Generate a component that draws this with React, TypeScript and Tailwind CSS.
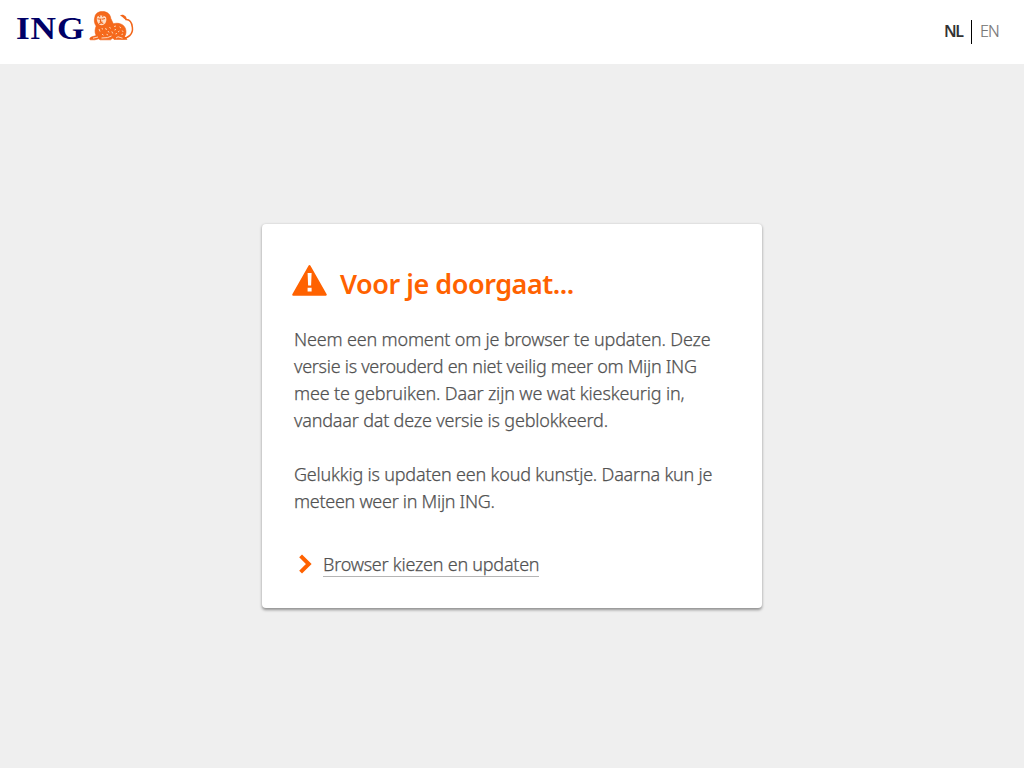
function Lion() {
  return (
    <svg className="h-[30px] w-[46px]" viewBox="0 0 46 30" fill="none">
      <path d="M32 27.5C39 28 44.3 23 43.4 16.5C42.8 11 40 8.2 36.3 8.6" stroke="#f2661a" strokeWidth="1.5" />
      <path d="M31 4.6C32.5 3 35 3.6 36.5 5.2C37.3 6.2 37.8 7.5 37.8 9C35.5 8.8 34.8 6.6 31 4.6Z" fill="#f2661a" />
      <path
        d="M6 5.5C6.5 2.4 10 .4 13.5 .6C18 .5 21.3 3.2 21.8 7.5L24.3 12.8C26.5 12 31 11.8 34.3 14.4C37.5 17.4 37.7 22.7 35.6 25.3L38 28.4H25L23.8 27L21.5 28.8H11L9.7 27.8L5.8 28.8H1.2C.3 28 1 26.3 3 25.8L7.2 24.5C5.3 21 6.1 18 7.2 15C4.8 12 5.2 8 6 5.5Z"
        fill="#f5691c"
        stroke="#ee5e12"
        strokeWidth=".6"
      />
      <path d="M8.2 5.8C10.2 4.2 15 4 17 6.2C17.9 8.5 17.2 12 14.9 13.6C12.8 14.8 10.5 14.2 9.1 12.3C7.6 10 7.5 7.5 8.2 5.8Z" fill="#ffdcc4" />
      <path d="M8.5 7.7L11.3 8.3M13 8.3L16 7.5M12 7.5L11.3 11H13.5M10.2 12.7C11.5 11.8 13 11.9 14.3 12.5M10 4.4L11 6.3M14 4.2L13.7 6.1" stroke="#ed6118" strokeWidth="1.1" />
      <path d="M13 17L13.5 18.5M16.5 17L17.5 19M10 18L11 20.5M20.5 16L21.5 17.5M19 20L20 21.5M25 15.5L27 15M30.5 15.8L32 17M25.5 19L27 18.4M33.2 19.5L34.2 21M29 21L30.4 20M32.5 23.6L34 23M13 23.2L14.5 24.2M17.5 23.3L19 24M26.5 23L28 22.4M22.8 20.5L23.8 22.5" stroke="#ffd2b2" strokeWidth="1" />
      <path d="M4 27.2L9 26M12.5 27L18.5 26.6L22.5 25M27 27L29 25.8L33.5 27.2" stroke="#ffe4d2" strokeWidth=".9" />
    </svg>
  );
}

function Warning() {
  return (
    <svg className="h-[33px] w-[36px]" viewBox="0 0 36 33">
      <path d="M17.5 2L33.8 30.7H1.2Z" fill="#ff6200" stroke="#ff6200" strokeWidth="2" strokeLinejoin="round" />
      <path d="M15.6 9h4l-.5 12.5h-3zM15.6 23.8h4v3.8h-4z" fill="#fff" />
    </svg>
  );
}

export default function App() {
  return (
    <div className="flex h-screen flex-col overflow-hidden bg-[#efefef] font-['Noto_Sans',sans-serif] text-[#525252]">
      <header className="flex h-16 shrink-0 justify-between bg-white pl-4">
        <div className="flex pt-[11px]">
          <div className="w-[73px]">
            <span className="mt-[-1px] block w-fit origin-left scale-x-[1.1] font-['Liberation_Serif',serif] text-[32px] leading-[36px] font-bold tracking-[0.8px] text-[#000066]">ING</span>
          </div>
          <Lion />
        </div>
        <nav className="mt-5 flex h-6 w-[80px] items-center text-base leading-6">
          <span className="relative -top-px w-[27px] font-semibold tracking-[-1.4px] text-[#333]">NL</span>
          <span className="h-6 w-px bg-black" />
          <span className="relative -top-px pl-2 font-light tracking-[-0.8px] text-[#767676] [-webkit-text-stroke:0.2px]">EN</span>
        </nav>
      </header>
      <main className="flex flex-1 items-center justify-center">
        <section className="h-[384px] w-[500px] rounded bg-white px-8 pt-10 shadow-[0_1.5px_3px_rgba(0,0,0,0.4)]">
          <div className="-ml-[2px] flex h-[40px] items-start">
            <Warning />
            <h1 className="ml-3 text-[27px] leading-[40px] font-semibold tracking-[-0.46px] whitespace-nowrap text-[#ff6200]">Voor je doorgaat...</h1>
          </div>
          <div className="mt-[22px] text-[18px] leading-[27px] font-light whitespace-nowrap [-webkit-text-stroke:0.25px]">
            <p>
              <span className="block w-fit tracking-[-0.165px]">Neem een moment om je browser te updaten. Deze</span>
              <span className="block w-fit tracking-[-0.285px]">versie is verouderd en niet veilig meer om Mijn ING</span>
              <span className="block w-fit tracking-[-0.15px]">mee te gebruiken. Daar zijn we wat kieskeurig in,</span>
              <span className="block w-fit tracking-[-0.19px]">vandaar dat deze versie is geblokkeerd.</span>
            </p>
            <p className="mt-[27px]">
              <span className="block w-fit tracking-[-0.2px]">Gelukkig is updaten een koud kunstje. Daarna kun je</span>
              <span className="block w-fit tracking-[-0.29px]">meteen weer in Mijn ING.</span>
            </p>
          </div>
          <a href="#" className="mt-9 ml-1 flex h-[26px] items-center text-[18px] leading-[26px] font-light">
            <svg className="h-5 w-[15px]" viewBox="0 0 15 20" fill="none">
              <path d="M2.6 1.8L10.8 10L2.6 18.2" stroke="#ff6200" strokeWidth="4" />
            </svg>
            <span className="ml-[10px] h-[26px] border-b border-[#b5b5b5] leading-[26px] tracking-[-0.24px] whitespace-nowrap [-webkit-text-stroke:0.25px]">Browser kiezen en updaten</span>
          </a>
        </section>
      </main>
    </div>
  );
}
